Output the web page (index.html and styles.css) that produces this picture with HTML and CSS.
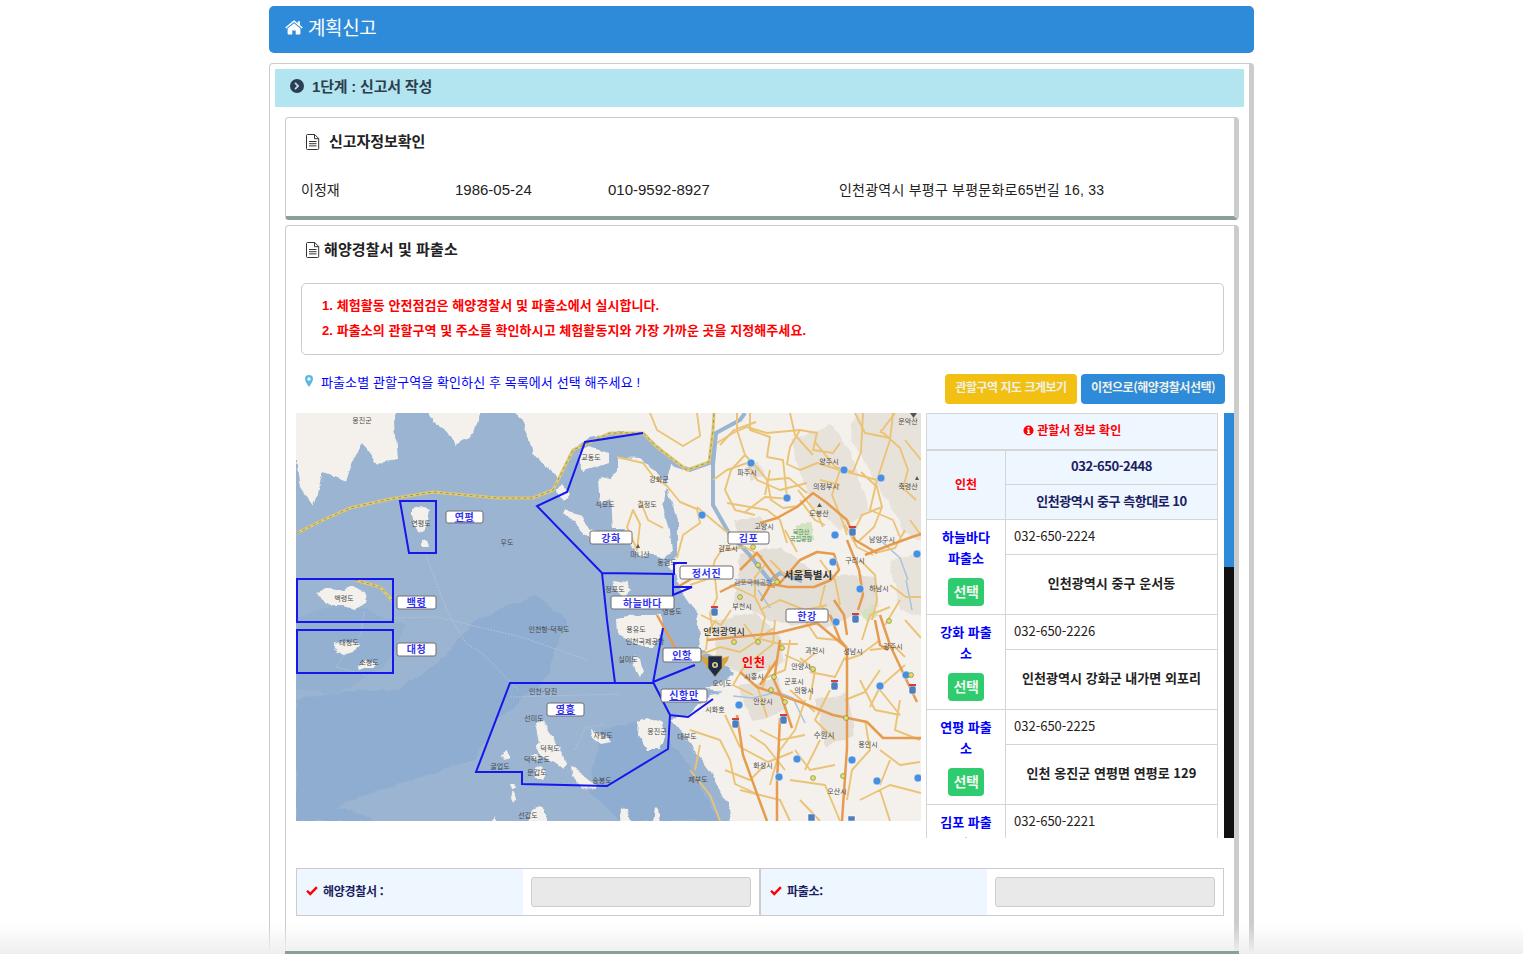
FILE: index.html
```html
<!DOCTYPE html>
<html lang="ko">
<head>
<meta charset="utf-8">
<title>계획신고</title>
<link rel="stylesheet" href="styles.css">
</head>
<body>
<div class="page">
  <header class="topbar">
    <svg class="ico-home" viewBox="0 0 18 15"><path d="M9 3.200 2.600 8.600v5.200c0 .4.3.7.7.7h4v-4h3.400v4h4c.4 0 .7-.3.7-.7V8.600z"/><path d="M9 .5c-.3 0-.6.1-.8.3L.2 7.400l.9 1.100L9 2l7.900 6.500.9-1.100-2.800-2.300V1.200h-2.300v2L9.800.8C9.600.6 9.300.5 9 .5z"/></svg>
    <span>계획신고</span>
  </header>

  <main class="panel">
    <h2 class="band">
      <svg class="ico-chev" viewBox="0 0 14 14"><circle cx="7" cy="7" r="7"/><path d="M5.600 3.300 9.300 7l-3.700 3.700-1.200-1.200L6.900 7 4.400 4.500z" fill="#b3e5f0"/></svg>
      1단계 : 신고서 작성
    </h2>

    <section class="card card-info">
      <h3 class="card-title title-a">
        <svg class="ico-doc" viewBox="0 0 14 16"><path d="M1.500.5h7.200l4 4v10a1 1 0 0 1-1 1H1.500a1 1 0 0 1-1-1v-13a1 1 0 0 1 1-1z" fill="#fff" stroke="#333"/><path d="M8.500.5v4.200h4.200" fill="none" stroke="#333"/><path d="M3 7.500h7.500M3 9.700h7.500M3 11.900h7.500" stroke="#333"/></svg>
        신고자정보확인
      </h3>
      <div class="info-row">
        <span>이정재</span>
        <span class="num">1986-05-24</span>
        <span class="num">010-9592-8927</span>
        <span class="addr-line">인천광역시 부평구 부평문화로65번길 16, 33</span>
      </div>
    </section>

    <section class="card card-police">
      <h3 class="card-title title-b">
        <svg class="ico-doc" viewBox="0 0 14 16"><path d="M1.500.5h7.200l4 4v10a1 1 0 0 1-1 1H1.500a1 1 0 0 1-1-1v-13a1 1 0 0 1 1-1z" fill="#fff" stroke="#333"/><path d="M8.500.5v4.200h4.200" fill="none" stroke="#333"/><path d="M3 7.500h7.500M3 9.700h7.500M3 11.900h7.500" stroke="#333"/></svg>
        해양경찰서 및 파출소
      </h3>

      <div class="notice">
        <p>1. 체험활동 안전점검은 해양경찰서 및 파출소에서 실시합니다.</p>
        <p>2. 파출소의 관할구역 및 주소를 확인하시고 체험활동지와 가장 가까운 곳을 지정해주세요.</p>
      </div>

      <div class="tools">
        <p class="hint">
          <svg class="ico-pin" viewBox="0 0 8 12"><path d="M4 0a4 4 0 0 0-4 4c0 2.500 4 8 4 8s4-5.500 4-8a4 4 0 0 0-4-4zm0 5.700A1.700 1.700 0 1 1 4 2.300a1.700 1.700 0 0 1 0 3.400z"/></svg>
          파출소별 관할구역을 확인하신 후 목록에서 선택 해주세요 !
        </p>
        <div class="tool-btns">
          <button class="btn btn-yellow">관할구역 지도 크게보기</button>
          <button class="btn btn-blue">이전으로(해양경찰서선택)</button>
        </div>
      </div>

      <div class="map-row">
        <svg class="map" viewBox="296 413 625 408" role="img" aria-label="관할구역 지도">
          <defs>
            <filter id="soft" x="0" y="0" width="100%" height="100%"><feGaussianBlur stdDeviation="0.35"/></filter>
            <filter id="coast" x="-5%" y="-5%" width="110%" height="110%">
              <feTurbulence type="fractalNoise" baseFrequency="0.07" numOctaves="3" seed="4"/>
              <feDisplacementMap in="SourceGraphic" scale="7" xChannelSelector="R" yChannelSelector="G"/>
              <feGaussianBlur stdDeviation="0.35"/>
            </filter>
          </defs>
          <rect x="296" y="413" width="625" height="408" fill="#9ab4d2"/>
          <g filter="url(#coast)">
            <path d="M296 700l50-8 50-2 40-25 40-45 60-25 30 25-20 60-50 40-20 40-50 15-60 20-70 26zM600 730l50-10 35 40 35 61h-100l-30-30zM296 790l80 31H296z" fill="#8fadd0"/>
            <path d="M296 620q30-20 70-10l40 15-20 40-50 30-40-5z" fill="#94b0d1"/>
          </g>
          <g filter="url(#coast)" fill="#f4f1ec">
            <path d="M290 405h110l-5 18 3 37-21 3-15-20-8 16-7 23-24-9-10 34-13-20-4-27-6-6z"/>
            <path d="M424 405h58l-5 20-10 14-12 6-8-14-12-8z"/>
            <path d="M506 405l17 15 10 33 14 17 13 8 10-25 20-16 20-4 33 0 14 14 13 16-3 24 10 33v37l-10 6 10 14 3 13 17 25 3 33 33 24-6 6-21 12 18 2-15 3-18 20-19 3 12 17 27 37 16 30 7 27h200V405z"/>
            <path d="M617 457l23 1 15 14 13 13-4 20 6 25 2 23-12 4-10-4-10 4-10-14-10-3 5-12-13 0-2-28-10 5-2-25 12-2 7-8z"/>
            <path d="M577 453l13-6 20 6v10l-27 8z"/>
            <path d="M556 492l6-8 8 10-4 6zM565 510l16 5 8 14 10 4-4 8-12-6-10-16-10-4z"/>
            <path d="M617 618l18-3 25 0 3 14-10 18-13 0-12-7-10-5zM612 580l14 2 6 8-8 6-10-6z"/>
            <path d="M633 656l7 3 4 12-4 7-6-6-3-10z"/>
            <path d="M638 723l10-5 15 6 2 13-5 13-12 0-5-8-6-9z"/>
            <path d="M412 510l8-2 9 3-4 18-5 4-5-6-3-12zM422 542l5-2 2 7h-7z"/>
            <path d="M315 593l14-4 14 2 10-4 14 6-2 10-12 6-10-3-12 0-8-7z"/>
            <path d="M333 645l10-3 6-2 10 4-5 8-10 3-6-2-5-4zM358 666l8-6 10 2-3 5-9 0-5 2z"/>
            <path d="M536 723l7-3 4 6 7 14 9 12 4 12-3 5-8-6-14-6-6-8 4-6z"/>
            <path d="M531 755l6 0 2 6-5 0zM533 770l8-3 5 5-3 6-8 0zM501 755l5-3 3 6-6 2z"/>
            <path d="M571 768l10 5 8 10 8 3-2 5-12-5-10-10z"/>
            <path d="M590 728l10 6 8 2 3 6-10 2-10-8zM510 783l4 0 2 6-4 0zM513 790l4 8-4 6-2-6z"/>
            <path d="M525 827l6-17 8-3 7 6 3 14zM490 828l5-13 5 13zM622 808l5 3 4 10h-10zM655 808l6 6 1 13h-10z"/>
          </g>
          <g filter="url(#coast)">
            <path d="M860 405h70v140l-27-14-15-30-12-15-10-25-12-15-4-15zM790 440l40-15 20 25 20 60-30 20-30-25zM890 560l40-10v70l-30-10z" fill="#e8e3da"/>
            <path d="M740 555l40-8 35 25 60 5 5 30-50 20-55-5-40-20zM715 620l40-8 25 25 5 25-35 15-35-15zM737 685l40-5 10 30-35 12zM815 700l30-5 10 40-30 12zM745 468l14-6 6 12-14 6zM735 520l25-4 6 14-25 8z" fill="#e3dfd6"/>
            <path d="M795 525l16-4 4 18-14 3zM860 610l14-6 6 14-14 4z" fill="#d4e2c2"/>
          </g>
          <g filter="url(#soft)">
            <path d="M745 413l-5 7-24 13-3 32 0 40 17 30 18 18 22 28 10-8 22 8M657 447l18 18 15 5 22-8 4-28" fill="none" stroke="#9ab4d2" stroke-width="4"/>
            <path d="M733 696l20 2 25-6 15 6 12 25M906 580l6 30M880 540l20 18 8 22M758 590l12 18" fill="none" stroke="#a9c2dc" stroke-width="1.500"/>
            <path d="M425 553l23 60 18 30 18 12 35 36M393 618l45-1 40 10 40 9 70 24M510 697l110-3M364 612l-3 22-6 8M366 675l-30-8 10-14M575 750l10-22 20-4" fill="none" stroke="#b5c6da" stroke-width="1" stroke-dasharray="1.500 1.500"/>
            <g fill="none" stroke="#ebc377" stroke-width="1.900" stroke-linejoin="round">
              <path d="M650 413l7 17 26 16 17-10-3-23M617 457l26 6 10 13 14 10 13 16 17 7 3 14-17 12-6 23M697 507l20 17 16 13M633 510l7 14-3 26-10-23z"/>
              <path d="M750 413v17l20 7-3 20 16 3 4 37M717 443l16-10 14-6 20 6 33-3 17 3-4 17 20 3 7-10M713 480l14-10 20-7 10 17 23 10 27-7M727 503l40 7 13 10 7 23M877 480l-7 30 23 10 7 17M800 430l-10 17-3 17 13 6 17-7 23 7 37 10 13-40 3-27"/>
              <path d="M720 445l14-15 22-8M737 413v17l8 25 14 15 8 10 22-2 18 15M767 480l4 20 12 8 16-2M745 455l-14 15-6 20 10 20 20 5M815 442l20 25 18 5 8-20 2-39M861 472l16 15 5 20-8 20-15 14M882 507l-20 8-10 20M880 430l20 18 8 22-5 18 13 12M840 470l-8 25 10 25 5 15M790 413l5 22 18 20M895 413l-15 20M800 500l15 20 10 5"/>
              <path d="M798 490l20 25 5 12M745 512l20-15 25 2M725 545l-10 15-5 18-20 7M715 578l2 20-7 15 3 20M730 585l25 12 10 20-5 22 20 5 18 0M755 597l0-20 10-12M820 560l15 20 5 25M860 560l15 15 2 25-5 20M905 530l-10 18-20 5M890 585l16 12 15 0M880 640l-20 15-15 5M905 665l-25 22-10 20M880 690l20 25M870 650l25-3 10 10M725 550l20-3 18 10M785 530l12 22M845 525l12 22 16 8M760 610l20-10 25 10 22-5"/>
              <path d="M690 730l30 10 10 20 5 24 22 10M725 715l15 32 28 15 25-10M757 685l10 32M790 640l-5 30-20 8M810 672l25 5 10-20M805 700l-10 30-15 20-10 35M845 700l20-8 15-22M865 720l5 30-18 20-5 30M880 750l20 15 20-3M860 800l30-15 31 8M790 780l35 5 15 36M740 790l40 10 10 21M820 740l-15 30M810 700l5-30-15-12M716 620l-8 12-2 18M744 624l12 16 18-12M775 620l-2 24-20 16M690 770l20 25 10 26M760 730l20 10 25-5M900 700l-5 30 25 10M880 790l10 31M800 800l20 21M700 745l-5 25M862 640l8-25 20-8M905 620l16 18"/>
              <path d="M701 615l20 10 10-15M700 655l20-8 20 5 15-10M745 665l-12 20 20 10M770 665l-8 25M785 655l18 8 12-10M805 620l12 18 20 2M825 585l-5 20 14 15M770 560l15 15 20-5M790 690l25 22M830 690l-15 30 20 20M795 750l15 20 25-5M750 735l15 10 20 25M725 770l25 10 15-15M860 680l15 30 25 5M890 760l-10 25M905 440l16 20M855 413l10 20 25 5M770 470l-5 25M820 480l20 5M910 520l11 15M900 600l-15 25M640 500l8 20 15 8"/>
            </g>
            <g fill="none" stroke="#e69b50" stroke-width="2.500" stroke-linejoin="round">
              <path d="M760 523l17-5 20-11 16-14 14 10 20 17 8 20 22 13M847 540l12 30 4 25-5 15"/>
              <path d="M740 570l17-17 10 13 13 17 20-23 17-8 17 2 5 16-8 10-17 7-26 0-17-3-10 17"/>
              <path d="M657 615l20 36 13 6M676 588l25-15M720 592l20-10 15 0 20 5"/>
              <path d="M737 715l6 40 17 47 7 19M847 648l0 100-5 73M780 718l-3 64 0 39"/>
              <path d="M740 672l17 15 43 15 33 13 34 7 16 16 38 0M707 640l70-7 40-10 30 25M777 660l-17 25M780 640l-6 40 8 18 10 30M830 615l10 25 7 8M847 635l-3-20-10-15M875 620l5 25 8 5M880 615l10 30 15 32 12 25"/>
              <path d="M890 545l22-8 9-3M865 555l25-10"/>
            </g>
            <path d="M297 533l26-13 27-12 40-9 43-7 64 6 36 0 20-8 20-40 37-17 33 0 14 14 30 23 22-8 4-32 1-17M355 580l25 7 12 13" fill="none" stroke="#dfca72" stroke-width="3"/>
            <path d="M297 533l26-13 27-12 40-9 43-7 64 6 36 0 20-8 20-40 37-17 33 0 14 14 30 23 22-8 4-32 1-17M355 580l25 7 12 13" fill="none" stroke="#7f7a58" stroke-width=".7" stroke-dasharray="3 3"/>
            <g fill="#4a8fe0" stroke="#fff" stroke-width=".5">
              <circle cx="751" cy="463" r="4"/><circle cx="844" cy="470" r="4"/><circle cx="881" cy="478" r="4"/><circle cx="787" cy="498" r="4"/><circle cx="702" cy="515" r="4"/><circle cx="835" cy="535" r="4"/><circle cx="833" cy="562" r="4"/><circle cx="917" cy="554" r="4"/><circle cx="860" cy="589" r="4"/><circle cx="836" cy="622" r="4"/><circle cx="739" cy="705" r="4"/><circle cx="880" cy="686" r="4"/><circle cx="906" cy="675" r="4"/><circle cx="852" cy="760" r="4"/><circle cx="797" cy="759" r="4"/><circle cx="779" cy="777" r="4"/><circle cx="877" cy="781" r="4"/><circle cx="918" cy="778" r="4"/>
            </g>
            <g fill="#4d7ec0" stroke="#fff" stroke-width=".5">
              <rect x="849" y="528" width="7" height="8" rx="2"/><rect x="711" y="608" width="7" height="8" rx="2"/><rect x="852" y="615" width="7" height="8" rx="2"/><rect x="732" y="720" width="7" height="8" rx="2"/><rect x="780" y="716" width="7" height="8" rx="2"/><rect x="831" y="682" width="7" height="8" rx="2"/><rect x="909" y="686" width="7" height="8" rx="2"/><rect x="808" y="814" width="7" height="7"/><rect x="848" y="816" width="7" height="5"/>
            </g>
            <g fill="#d83a3a"><rect x="849" y="526" width="7" height="2"/><rect x="711" y="606" width="7" height="2"/><rect x="852" y="613" width="7" height="2"/><rect x="732" y="718" width="7" height="2"/><rect x="780" y="714" width="7" height="2"/><rect x="831" y="680" width="7" height="2"/><rect x="909" y="684" width="7" height="2"/></g>
            <g fill="#dfdc6a" stroke="#6d6a2e" stroke-width=".5">
              <circle cx="753" cy="547" r="2.500"/><circle cx="758" cy="565" r="2.500"/><circle cx="777" cy="582" r="2.500"/><circle cx="740" cy="597" r="2.500"/><circle cx="734" cy="642" r="2.500"/><circle cx="758" cy="642" r="2.500"/><circle cx="782" cy="648" r="2.500"/><circle cx="774" cy="677" r="2.500"/><circle cx="771" cy="690" r="2.500"/><circle cx="785" cy="702" r="2.500"/><circle cx="846" cy="718" r="2.500"/><circle cx="813" cy="669" r="2.500"/><circle cx="813" cy="778" r="2.500"/><circle cx="843" cy="776" r="2.500"/><circle cx="889" cy="621" r="2.500"/><circle cx="911" cy="675" r="2.500"/></g>
            <path d="M822 507l-5 0 2.500-4zM919 480l-4 0 2-4zM640 548l-4 0 2-4zM910 413h7l-3.500 5z" fill="#555"/>
          </g>
          <g class="pl">
            <text x="362" y="423">옹진군</text><text x="591" y="460">교동도</text><text x="421" y="526">연평도</text><text x="507" y="545">우도</text><text x="344" y="601">백령도</text><text x="349" y="645">대청도</text><text x="369" y="665">소청도</text><text x="605" y="507">석모도</text><text x="659" y="482">강화군</text><text x="647" y="507">길정도</text><text x="640" y="557">마니산</text><text x="667" y="565">동검도</text><text x="615" y="592">정포도</text><text x="672" y="614">영종도</text>
            <text x="549" y="632">인천항-덕적도</text><text x="543" y="694">인천-당진</text><text x="534" y="721">선미도</text><text x="550" y="751">덕적도</text><text x="537" y="762">덕적군도</text><text x="537" y="775">문갑도</text><text x="500" y="769">굴업도</text><text x="602" y="783">승봉도</text><text x="603" y="738">자월도</text><text x="528" y="818">선갑도</text>
            <text x="636" y="632">용유도</text><text x="628" y="662">실미도</text><text x="657" y="734">옹진군</text><text x="687" y="739">대부도</text><text x="698" y="782">제부도</text><text x="715" y="712">시화호</text><text x="722" y="686">오이도</text><text x="645" y="644">인천국제공항</text>
            <text x="747" y="475">파주시</text><text x="829" y="464">양주시</text><text x="826" y="489">의정부시</text><text x="908" y="489">축령산</text><text x="908" y="424">운악산</text><text x="764" y="529">고양시</text><text x="728" y="551">김포시</text><text x="819" y="516">도봉산</text><text x="882" y="542">남양주시</text><text x="855" y="563">구리시</text><text x="879" y="591">하남시</text><text x="742" y="609">부천시</text><text x="754" y="679">시흥시</text><text x="763" y="704">안산시</text><text x="801" y="669">안양시</text><text x="815" y="653">과천시</text><text x="794" y="684">군포시</text><text x="804" y="693">의왕시</text><text x="853" y="654">성남시</text><text x="824" y="738" class="pl-b">수원시</text><text x="868" y="747">용인시</text><text x="893" y="649">광주시</text><text x="763" y="768">화성시</text><text x="837" y="794">오산시</text>
            <text x="808" y="579" class="pl-c">서울특별시</text><text x="724" y="635" class="pl-d">인천광역시</text><text x="753" y="585" class="pl-e">김포국제공항</text><text x="801" y="534" class="pl-f">북한산</text><text x="801" y="541" class="pl-f">국립공원</text>
          </g>
          <g>
            <path d="M701 656q8 2 14 7 6-5 14-7-1 6-4 8-1 4-5 5h-10q-4-1-5-5-3-2-4-8z" fill="#d6a63c"/>
            <path d="M708 656h14v12l-7 9-7-9z" fill="#1c2a4c" stroke="#c9a13e" stroke-width=".7"/>
            <circle cx="715" cy="665" r="3" fill="#e5d47c"/>
            <circle cx="715" cy="665" r="1.400" fill="#2c3e70"/>
          </g>
          <g fill="none" stroke="#1616ee" stroke-width="2">
            <path d="M400 501h36v52h-27z"/>
            <path d="M297 579h96v43h-96zM297 630h96v43h-96z"/>
            <path d="M643 433l-58 9-18 50-30 14 65 67 72 1v-11h13M673 574v21l19-8h-19M602 573l5 47 8 63h38l10-55M653 682l42-17M615 683H510l-34 89h46v12l85 2 61-37 2-34 18 2 25-18M653 682l17 33"/>
          </g>
          <g class="tag">
            <rect x="446" y="511" width="37" height="12" rx="2"/><text x="464.500" y="520.500" class="uline">연평</text>
            <rect x="397" y="596" width="39" height="13" rx="2"/><text x="416.500" y="606" class="uline">백령</text>
            <rect x="397" y="643" width="39" height="13" rx="2"/><text x="416.500" y="653">대청</text>
            <rect x="547" y="703" width="37" height="13" rx="2"/><text x="565.500" y="713" class="uline">영흥</text>
            <rect x="590" y="531" width="42" height="13" rx="2"/><text x="611" y="541.500">강화</text>
            <rect x="728" y="532" width="41" height="12" rx="2"/><text x="748.500" y="542">김포</text>
            <rect x="680" y="566" width="53" height="13" rx="2"/><text x="706.500" y="576.500">정서진</text>
            <rect x="611" y="596" width="63" height="13" rx="2"/><text x="642.500" y="606.500">하늘바다</text>
            <rect x="786" y="609" width="42" height="13" rx="2"/><text x="807" y="619.500">한강</text>
            <rect x="663" y="648" width="38" height="14" rx="2"/><text x="682" y="658.500" class="uline">인항</text>
            <rect x="661" y="689" width="46" height="13" rx="2"/><text x="684" y="699" class="uline">신항만</text>
          </g>
          <text x="754" y="667" class="city-red">인천</text>
        </svg>

        <div class="list-wrap">
          <div class="list-scroll">
            <table class="list">
              <colgroup><col class="col-name"><col class="col-info"></colgroup>
              <tbody>
                <tr class="head"><td colspan="2">
                  <svg class="ico-info" viewBox="0 0 12 12"><circle cx="6" cy="6" r="5.500" fill="#f00"/><path d="M4.900 2.200h2.200v1.700H4.900zM4.400 5h2.700v3.600h.8v1.300H4.300V8.600h.8V6.300h-.7z" fill="#fff"/></svg>
                  관할서 정보 확인
                </td></tr>
                <tr class="hq row-phone"><td rowspan="2" class="hq-name">인천</td><td class="hq-cell">032-650-2448</td></tr>
                <tr class="hq row-hq-addr"><td class="hq-cell">인천광역시 중구 측항대로 10</td></tr>

                <tr class="row-phone"><td rowspan="2" class="name"><a>하늘바다 파출소</a><button class="pick">선택</button></td><td class="phone">032-650-2224</td></tr>
                <tr class="row-addr"><td class="addr">인천광역시 중구 운서동</td></tr>

                <tr class="row-phone"><td rowspan="2" class="name"><a>강화 파출소</a><button class="pick">선택</button></td><td class="phone">032-650-2226</td></tr>
                <tr class="row-addr"><td class="addr">인천광역시 강화군 내가면 외포리</td></tr>

                <tr class="row-phone"><td rowspan="2" class="name"><a>연평 파출소</a><button class="pick">선택</button></td><td class="phone">032-650-2225</td></tr>
                <tr class="row-addr"><td class="addr">인천 옹진군 연평면 연평로 129</td></tr>

                <tr class="row-phone"><td rowspan="2" class="name"><a>김포 파출소</a><button class="pick">선택</button></td><td class="phone">032-650-2221</td></tr>
                <tr class="row-addr"><td class="addr">경기도 김포시 대곶면</td></tr>
              </tbody>
            </table>
          </div>
          <div class="scrollbar"><div class="thumb"></div></div>
        </div>
      </div>

      <div class="pick-form">
        <label class="f-label">
          <svg class="ico-check" viewBox="0 0 12 10"><path d="M4.300 9.700.2 5.600l1.700-1.700 2.400 2.400L10 .3l1.800 1.700z"/></svg>
          해양경찰서 :
        </label>
        <div class="f-field"><input class="f-input" disabled></div>
        <label class="f-label f-second">
          <svg class="ico-check" viewBox="0 0 12 10"><path d="M4.300 9.700.2 5.600l1.700-1.700 2.400 2.400L10 .3l1.800 1.700z"/></svg>
          파출소:
        </label>
        <div class="f-field"><input class="f-input" disabled></div>
      </div>
    </section>
  </main>
</div>
<div class="fade"></div>
</body>
</html>
```

FILE: styles.css
```css
* { box-sizing: border-box; }
html, body { margin: 0; height: 954px; overflow: hidden; background: #fff; }
body { font-family: "Liberation Sans", "Noto Sans CJK KR", sans-serif; color: #222; font-size: 14px; }
h2, h3, p { margin: 0; }

.page { width: 985px; margin: 6px auto 0; }

.topbar { height: 47px; background: #2e8bd9; border-radius: 5px; display: flex; align-items: center; padding: 0 0 7px 16px; gap: 5px; color: #fff; font-size: 19px; margin-bottom: 10px; letter-spacing: -.4px; }
.ico-home { width: 18px; height: 15px; fill: #fff; margin-top: 2px; }

.panel { border: 1px solid #ccc; border-right-width: 5px; border-bottom: 0; border-radius: 4px 4px 0 0; padding: 5px 5px 0; height: 891px; }
.band { height: 38px; background: #b3e5f0; color: #2c3e50; font-size: 15px; font-weight: 700; display: flex; align-items: center; gap: 8px; padding: 0 0 6px 15px; letter-spacing: -.2px; }
.ico-chev { width: 14px; height: 14px; fill: #2c3e50; margin-top: 2px; }

.card { border: 1px solid #ccc; border-right-width: 5px; border-bottom: 4px solid #8a9f9b; border-radius: 4px; margin: 0 5px 0 10px; }
.card-info { height: 103px; margin-top: 10px; }
.card-police { height: 730px; margin-top: 5px; position: relative; }
.card-police::after { content: ""; position: absolute; left: -1px; right: -5px; bottom: -4px; height: 4px; background: #8a9f9b; z-index: 2; }

.card-title { display: flex; align-items: center; font-size: 15px; font-weight: 700; color: #222; letter-spacing: -.05px; }
.title-a { height: 45px; gap: 9px; padding-left: 20px; margin-bottom: 3px; }
.title-b { height: 45px; gap: 4px; padding-left: 20px; margin-bottom: 12px; letter-spacing: .12px; }
.ico-doc { width: 14px; height: 16px; flex: none; margin-top: 2px; }

.info-row { display: grid; grid-template-columns: 154px 153px 231px 1fr; align-items: baseline; padding: 14px 0 0 15px; line-height: 20px; font-size: 14px; }
.num { font-size: 15px; }
.addr-line { letter-spacing: .23px; }

.notice { margin: 0 10px 0 15px; height: 72px; border: 1px solid #ccc; border-radius: 5px; padding: 9px 0 0 20px; color: #f00; font-size: 13px; font-weight: 700; line-height: 25px; letter-spacing: .06px; }

.tools { display: flex; justify-content: space-between; margin: 19px 9px 9px 19px; height: 30px; }
.hint { color: #00f; font-size: 13px; display: flex; align-items: center; gap: 8px; height: 14px; letter-spacing: .1px; }
.ico-pin { width: 8px; height: 12px; fill: #5bb8e0; }
.tool-btns { display: flex; gap: 4px; }
.btn { border: 0; border-radius: 4px; height: 30px; padding: 0 0 5px; color: #f1f1e8; font: 700 12px "Noto Sans CJK KR", sans-serif; letter-spacing: -.5px; }
.btn-yellow { width: 132px; background: #f1c013; }
.btn-blue { width: 144px; background: #2e8bd9; }

.map-row { display: flex; margin-left: 10px; height: 425px; }
.map { width: 625px; height: 408px; flex: none; display: block; }
.pl text { font: 7px "Noto Sans CJK KR", sans-serif; fill: #4a4a4a; text-anchor: middle; }
.pl .pl-c { font-size: 10.500px; font-weight: 700; fill: #333; }
.pl .pl-d { font-size: 9px; font-weight: 500; fill: #333; }
.pl .pl-e { font-size: 7px; fill: #4c7fb5; }
.pl .pl-f { font-size: 6px; fill: #3d8c4d; }
.pl .pl-b { font-size: 7.500px; }
.tag rect { fill: #fff; stroke: #6e6e6e; stroke-width: 1px; }
.tag text { font: 700 10px "Noto Sans CJK KR", sans-serif; fill: #3232f0; text-anchor: middle; letter-spacing: .6px; }
.tag .uline { text-decoration: underline; text-decoration-color: #f06a6a; }
.city-red { font: 700 12px "Noto Sans CJK KR", sans-serif; fill: #f00; text-anchor: middle; letter-spacing: 1px; }

.list-wrap { display: flex; margin-left: 5px; gap: 6px; height: 425px; }
.list-scroll { width: 292px; height: 425px; overflow: hidden; }
.list { width: 292px; table-layout: fixed; border-collapse: collapse; font-family: "Noto Sans CJK KR", sans-serif; font-size: 13px; }
.col-name { width: 79px; }
.list td { border: 1px solid #d5d5d5; text-align: center; padding: 0; vertical-align: middle; }
.head td { height: 36px; background: #eef6ff; color: #f00; font-weight: 700; font-size: 12px; border-bottom: 2px solid #d5d5d5; padding-bottom: 3px; }
.ico-info { width: 11px; height: 11px; vertical-align: -1px; }
.hq td { background: #eef6ff; color: #1b2060; font-weight: 700; font-size: 13px; }
.list .hq-cell { padding-bottom: 4px; letter-spacing: -.45px; }
.list .hq-name { color: #f00; font-size: 12px; padding-bottom: 3px; }
.row-phone td { height: 35px; }
.row-hq-addr td { height: 35px; }
.row-addr td { height: 60px; }
.list td.phone { text-align: left; padding: 0 0 3px 8px; font-size: 13px; color: #222; }
.list td.addr { font-weight: 700; font-size: 13px; color: #222; padding-bottom: 5px; letter-spacing: .05px; }
.list td.name { vertical-align: top; padding: 6px 8px 0; }
.name a { display: block; color: #00f; font-weight: 700; font-size: 13px; line-height: 21px; }
.pick { display: block; margin: 10px auto 0; width: 36px; height: 28px; border: 0; border-radius: 4px; background: #2ecb6f; color: #f2f7ee; font: 700 14px "Noto Sans CJK KR", sans-serif; padding: 0 0 2px; letter-spacing: -.5px; }

.scrollbar { width: 10px; height: 425px; background: #111; }
.thumb { height: 154px; background: #2e8bd9; }

.pick-form { display: grid; grid-template-columns: 226px 236px 228px 236px; width: 928px; height: 48px; margin: 30px 0 0 10px; border: 1px solid #ccc; }
.f-label { background: #eef6ff; color: #1b2060; font-weight: 700; font-size: 12px; font-family: "Noto Sans CJK KR", sans-serif; display: flex; align-items: center; gap: 5px; padding: 0 0 3px 9px; letter-spacing: -.3px; }
.f-second { border-left: 2px solid #ccc; }
.f-field { padding: 8px; }
.f-input { display: block; width: 220px; height: 30px; background: #e9e9e9; border: 1px solid #ccc; border-radius: 3px; padding: 0; }
.ico-check { width: 12px; height: 10px; fill: #f00; }

.fade { position: fixed; left: 0; right: 0; bottom: 0; height: 30px; background: linear-gradient(rgba(238,238,238,0), #efefef); pointer-events: none; z-index: 1; }
```
